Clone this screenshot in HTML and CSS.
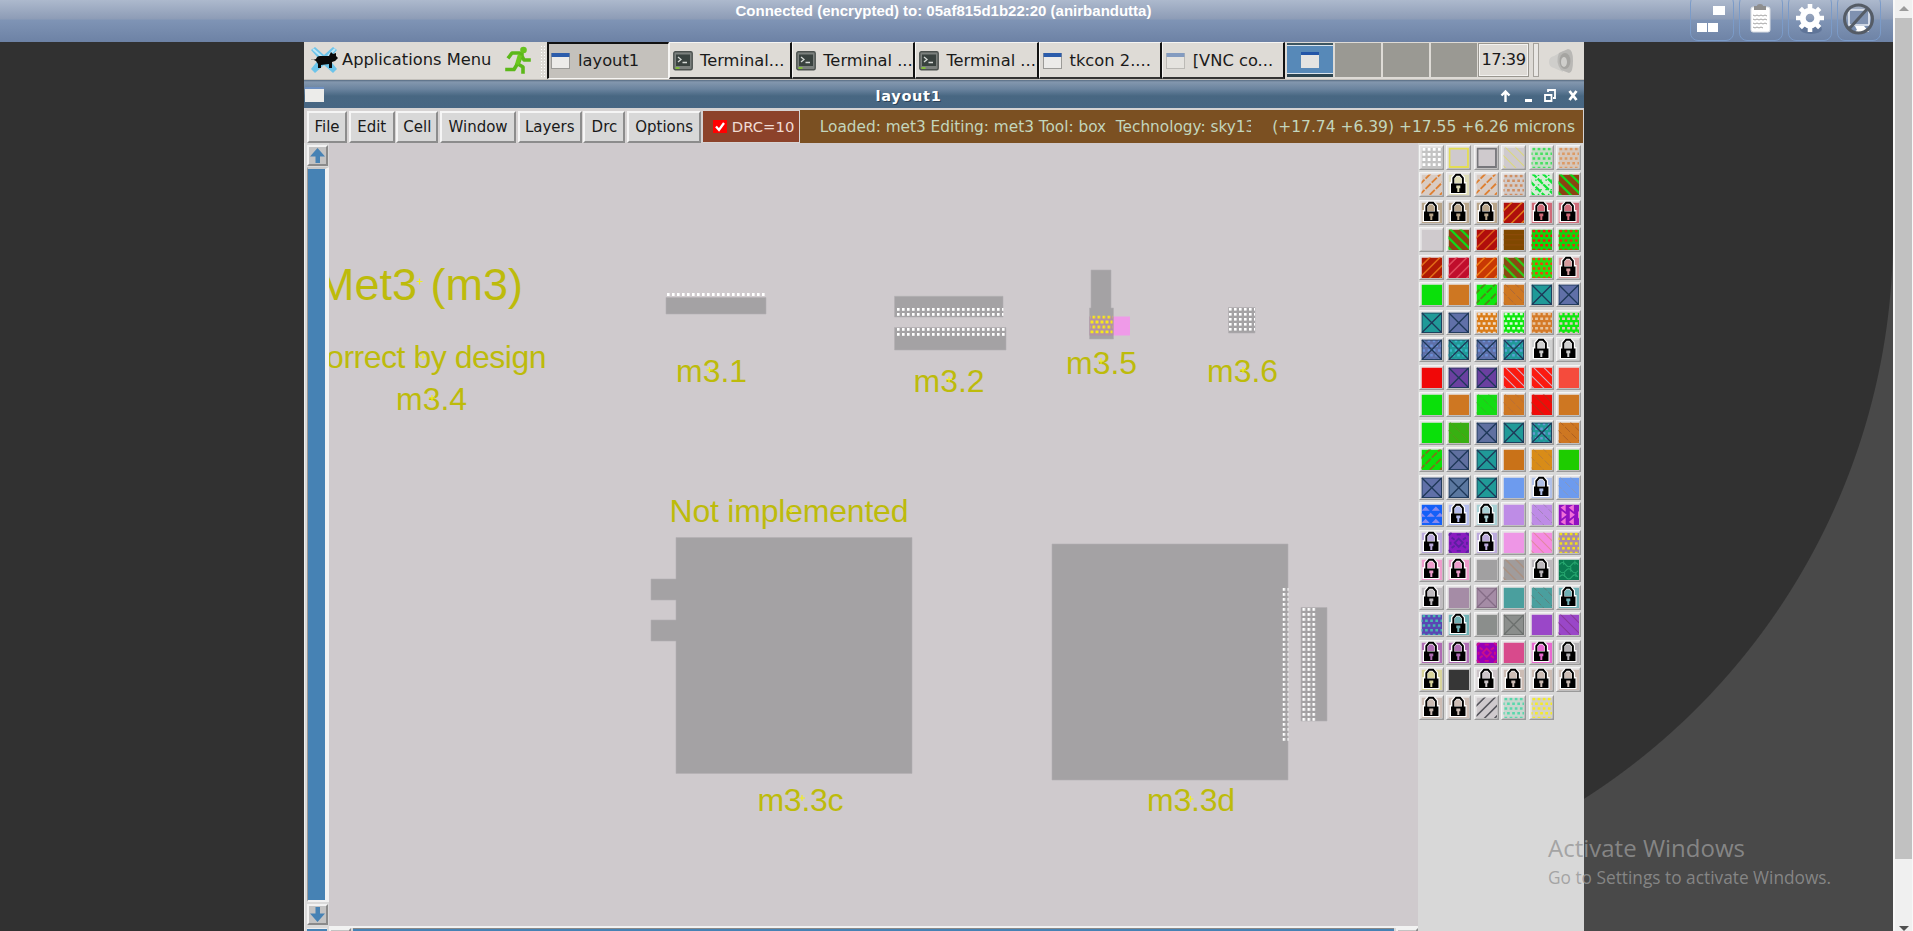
FILE: index.html
```html
<!DOCTYPE html>
<html lang="en">
<head>
<meta charset="utf-8">
<title>layout1</title>
<link rel="stylesheet" href="styles.css">
</head>
<body>
<div class="viewer">
  <header class="topbar">
    <div class="status">Connected (encrypted) to: 05af815d1b22:20 (anirbandutta)</div>
    <div class="tools">
      <div class="tool"><svg viewBox="0 0 44 46" width="44" height="46"><g fill="#fff"><rect x="23" y="11" width="12" height="9"/><rect x="7" y="28" width="10" height="9"/><rect x="18" y="28" width="10" height="9"/></g></svg></div>
      <div class="tool"><svg viewBox="0 0 44 46" width="44" height="46"><rect x="12" y="12" width="19" height="25" rx="2" fill="#fff" stroke="#d9dde3"/><path d="M15 15v-4h3q0-2 3-2t3 2h3v4z" fill="#8e8e8e"/><path d="M14 20l2 1 2-1 2 1 2-1 2 1 2-1 2 1M14 24l2 1 2-1 2 1 2-1 2 1 2-1 2 1M14 28l2 1 2-1 2 1 2-1 2 1 2-1 2 1M14 32l2 1 2-1 2 1 2-1 2 1" stroke="#999" stroke-width=".9" fill="none"/></svg></div>
      <div class="tool"><svg viewBox="0 0 44 46" width="44" height="46"><ellipse cx="23" cy="34" rx="11" ry="5" fill="#4f6488" opacity=".55"/><circle cx="22" cy="23" r="7.300" fill="none" stroke="#fff" stroke-width="6"/><g stroke="#fff" stroke-width="4.600"><path d="M22 9v5M22 32v5M8 23h5M31 23h5M12.300 13.300l3.500 3.500M28.200 29.200l3.500 3.500M31.700 13.300l-3.500 3.500M15.800 29.200l-3.500 3.500"/></g></svg></div>
      <div class="tool"><svg viewBox="0 0 44 46" width="44" height="46"><path d="M12 15h20v15H12z" fill="#7f91b0" stroke="#e9edf4" stroke-width="1.600"/><path d="M18 31h9l5 6H17l3-2z" fill="#fff"/><circle cx="21.500" cy="24" r="14" fill="none" stroke="#555c66" stroke-width="3"/><path d="M12 34L31 13" stroke="#555c66" stroke-width="3"/></svg></div>
    </div>
  </header>
  <main class="stage">
    <div class="desktop">
      <div class="taskbar">
        <div class="apps">
          <svg width="29" height="29" viewBox="0 0 29 29"><path d="M1 4l4-3 9 8 9-8 4 3-8 9 8 10-4 4-9-8-9 8-4-4 8-10z" fill="#6cc4ea"/><path d="M3 3l9 8M25 3l-7 7" stroke="#bfe6f6" stroke-width="2"/><path d="M1 13q2 1 5 0 1-3 4-3h9l2-4 2 2 3-1v3l2 2-3 3-3 1v6h-3v-4l-8 1v3H8v-4l-2-3-4-2z" fill="#0a0a0a"/></svg>
          <span>Applications Menu</span>
        </div>
        <svg class="runner" width="26" height="29" viewBox="0 0 26 29"><g fill="none" stroke="#5cb81a" stroke-width="3.600" stroke-linecap="square" stroke-linejoin="round"><path d="M4 11l3-4h7l3 1-4 10 5 3v5"/><path d="M2 23.500h7l3-5M17 10l2 4h5"/></g><path d="M13 8l4 2-3 9-4-1z" fill="#6cc81e"/><circle cx="18.500" cy="4" r="3.300" fill="#67c21e"/></svg>
        <div class="grip"></div>
        <div class="task on"><svg class="ico"><use href="#win"/></svg><span>layout1</span></div>
        <div class="task"><svg class="ico"><use href="#term"/></svg><span>Terminal...</span></div>
        <div class="task"><svg class="ico"><use href="#term"/></svg><span>Terminal ...</span></div>
        <div class="task"><svg class="ico"><use href="#term"/></svg><span>Terminal ...</span></div>
        <div class="task"><svg class="ico"><use href="#win"/></svg><span>tkcon 2....</span></div>
        <div class="task last"><svg class="ico faded"><use href="#win"/></svg><span>[VNC co...</span></div>
        <div class="pager"><div class="desk cur"><svg width="18" height="16"><rect width="18" height="16" fill="#e4e4e2"/><rect width="18" height="3" fill="#2356a8"/></svg></div><div class="desk"></div><div class="desk"></div><div class="desk"></div></div>
        <div class="clock">17:39</div>
        <div class="slot"></div>
        <svg class="speaker" width="30" height="28" viewBox="0 0 30 28"><path d="M2 14q0-5 5-6l9-5v21l-9-4q-5-1-5-6z" fill="#cfcecb"/><path d="M12 5l9-4q5 0 5 12t-4 12l-8-3q-6-8-2-17z" fill="#b9b8b5"/><ellipse cx="18" cy="13" rx="5.500" ry="8" fill="#a5a4a1"/><ellipse cx="17" cy="14" rx="3" ry="5" fill="#cfcecb"/></svg>
      </div>
      <div class="titlebar">
        <svg width="19" height="15"><rect width="19" height="15" fill="#ececea"/><rect width="19" height="2" fill="#6d8fc0"/></svg>
        <span class="title">layout1</span>
        <svg class="wbtns" width="82" height="18" viewBox="0 0 82 18"><g fill="none" stroke="#fff" stroke-width="2.400"><path d="M5.500 15V5M1.500 8.500l4-4 4 4"/><path d="M25 13.500h7" stroke-width="3"/><path d="M45 8h6.500v6H45zM48 5V3h7v8h-2" stroke-width="1.800"/><path d="M69.500 4l7 9M76.500 4l-7 9" stroke-width="2.800"/></g></svg>
      </div>
      <div class="menubar">
        <div class="mb w1">File</div><div class="mb w2">Edit</div><div class="mb w3">Cell</div><div class="mb w4">Window</div><div class="mb w5">Layers</div><div class="mb w6">Drc</div><div class="mb w7">Options</div>
        <div class="drc"><svg width="14" height="13"><rect width="14" height="13" fill="#f00"/><path d="M3 6.500l3 3.500 5-7" stroke="#fff" stroke-width="2.300" fill="none"/></svg><span>DRC=10</span></div>
        <div class="info"><span class="loaded">Loaded: met3 Editing: met3 Tool: box&nbsp; Technology: sky13</span><span class="pos">(+17.74 +6.39) +17.55 +6.26 microns</span></div>
      </div>
      <div class="work">
        <div class="vscroll">
          <div class="sbtn"><svg width="17" height="17"><path d="M8.500 1L16 9.500h-5V16H6.500V9.500H1z" fill="#4682b4"/></svg></div>
          <div class="trough"></div>
          <div class="sbtn"><svg width="17" height="17"><path d="M8.500 16L16 7.500h-5V1H6.500v6.500H1z" fill="#4682b4"/></svg></div>
          <div class="corner"></div>
        </div>
        <div class="center">
          <svg class="canvas" width="1089" height="783" viewBox="329 143 1089 783">
            <defs>
              <pattern id="d1" x="667" y="293" width="5" height="5" patternUnits="userSpaceOnUse"><rect width="2.600" height="3" fill="#fff"/></pattern>
              <pattern id="d2" x="897" y="308" width="5" height="5" patternUnits="userSpaceOnUse"><rect width="2.600" height="2.800" fill="#fff"/></pattern>
              <pattern id="d3" x="1282.500" y="588" width="5" height="5" patternUnits="userSpaceOnUse"><rect width="2.600" height="2.800" fill="#fff"/></pattern>
              <pattern id="d4" x="1302.500" y="608" width="5" height="5" patternUnits="userSpaceOnUse"><rect width="2.600" height="2.800" fill="#fff"/></pattern>
              <pattern id="d5" x="1229" y="308" width="5" height="5" patternUnits="userSpaceOnUse"><rect width="2.600" height="2.600" fill="#fff"/></pattern>
              <pattern id="y1" x="1092.500" y="315.500" width="5" height="10" patternUnits="userSpaceOnUse"><rect y="0" width="2.600" height="3" fill="#f6e81c"/><path d="M0 5h1v3H0zM3 5h2v3H3z" fill="#f6e81c"/></pattern>
            </defs>
            <g fill="#a4a2a4" stroke="#b3b0b3" stroke-width=".6">
              <path d="M666 297.500h100V314H666zM894.500 296.300H1003v20.700H894.500zM894.500 327.500H1006V350H894.500z"/>
              <path d="M1091 270h20v38h2.500v31h-24v-31h1.500zM1228.500 307.500H1255V333h-26.500z"/>
              <path d="M676 537.500h236v236H676V641h-25v-21h25v-20h-25v-21h25zM1052 544h236v236h-236zM1301 607.500h26V721h-26z"/>
            </g>
            <path d="M1113.500 316.500H1130v19h-16.500z" fill="#ef9ae8"/>
            <path d="M1089.500 316.500h24v19h-24z" fill="#b291a6"/>
            <path d="M1090 315.500h22.500v18H1090z" fill="url(#y1)"/>
            <path d="M667 293h100v4H667z" fill="url(#d1)"/>
            <path d="M895 308h108.500v9H895zM895 328h111v9H895z" fill="url(#d2)"/>
            <path d="M1282.500 588h6v153h-6z" fill="url(#d3)"/>
            <path d="M1302 608h13.500v113H1302z" fill="url(#d4)"/>
            <path d="M1229 308h26v25h-26z" fill="url(#d5)"/>
            <g class="lbl">
              <text class="big" x="317" y="299.500">Met3</text><text class="big" x="430.500" y="299.500">(m3)</text>
              <text x="546.500" y="368" text-anchor="end" textLength="243">Correct by design</text>
              <text x="396" y="409.500">m3.4</text>
              <text x="676" y="382">m3.1</text>
              <text x="913.500" y="392">m3.2</text>
              <text x="1066" y="373.500">m3.5</text>
              <text x="1207" y="382">m3.6</text>
              <text x="669.500" y="522" textLength="239">Not implemented</text>
              <text x="757.500" y="810.500" textLength="86">m3.3c</text>
              <text x="1147" y="810.500" textLength="88">m3.3d</text>
            </g>
            <path stroke="#f0ee20" stroke-width="1.200" d="M706.500 370h6M709.500 367v6M946 379.500h6M949 376.500v6M1098 361h6M1101 358v6M1240 370h6M1243 367v6M416.500 281.500h6M419.500 278.500v6M420 357h6M423 354v6M429 398h6M432 395v6M788 510h6M791 507v6M799 798h6M802 795v6M1187.500 799h6M1190.500 796v6"/>
          </svg>
          <div class="hscroll"><div class="hb"></div><div class="ht"></div><div class="hb"></div></div>
        </div>
        <div class="palette" id="palette"></div>
      </div>
    </div>
  </main>
</div>
<div class="pagescroll"><div class="arr up"></div><div class="thumb"></div><div class="rest"></div><div class="arr down"></div></div>
<div class="watermark"><div class="wm1">Activate Windows</div><div class="wm2">Go to Settings to activate Windows.</div></div>
<svg class="defs">
  <symbol id="win" viewBox="0 0 20 20"><rect x=".5" y="2.500" width="18" height="15" fill="#ecebe9" stroke="#9b9a97"/><rect x=".5" y="2" width="18" height="4" fill="#2b5cab"/></symbol>
  <symbol id="term" viewBox="0 0 20 20"><rect x=".8" y=".8" width="18.400" height="18" rx="1.500" fill="#7c817e" stroke="#4c524f" stroke-width="1.400"/><rect x="3" y="3.500" width="14" height="11.500" fill="#39423f"/><path d="M5 6l3 2.500L5 11M9.500 11.500H14" stroke="#d5d9d6" stroke-width="1.300" fill="none"/><path d="M2.500 17h4" stroke="#86d024" stroke-width="1.500"/></symbol>
</svg>
<script src="palette.js"></script>
</body>
</html>
```
FILE: styles.css
```css
* { box-sizing: border-box; }
body { margin: 0; width: 1913px; height: 931px; display: flex; overflow: hidden; background: #fff; font-family: "DejaVu Sans", sans-serif; color: #1a1a1a; position: relative; }
svg { display: block; flex: none; }
.defs { position: absolute; width: 0; height: 0; }
.viewer { width: 1893px; display: flex; flex-direction: column; }
.topbar { height: 42px; flex: none; overflow: hidden; display: grid; grid-template-columns: 1887px 0; background: linear-gradient(#adb9cd 0, #8d9cb6 19px, #7f94b5 20px, #6d82a5 42px); }
.status { grid-area: 1 / 1; text-align: center; font: bold 15px/22px "Liberation Sans", Arial, sans-serif; color: #fff; white-space: nowrap; }
.tools { grid-area: 1 / 1; display: flex; gap: 5px; justify-content: flex-end; padding-right: 6px; margin-top: -5px; }
.tool { width: 44px; height: 46px; border: 1px solid #7b9bc8; border-radius: 8px; }
.tool svg { margin: -1px; }
.stage {
  height: 889px;
  padding-left: 304px;
  background:
    linear-gradient(#313131, #313131) 0 0 / 1000px 100% no-repeat,
    linear-gradient(#313131, #313131) 0 0 / 100% 193px no-repeat,
    radial-gradient(circle at 1224px 193px, #313131 668.500px, #494949 669.500px);
}
.desktop { width: 1280px; height: 889px; display: flex; flex-direction: column; background: #d8d8d8; }
.taskbar { height: 38px; flex: none; display: flex; background: #dedbd6; border-bottom: 1px solid #c2bfba; font-size: 16.300px; line-height: 35px; white-space: nowrap; }
.apps { width: 198px; display: flex; padding: 0 0 0 6px; font-size: 16.300px; }
.apps svg { margin: 4px 3px 0 0; }
.runner { margin: 4px 9px 0 3px; }
.grip { width: 7px; margin-top: 3px; height: 32px; background: radial-gradient(circle, #fff 0.8px, transparent 1px) 0 0 / 3px 3px; }
.task { width: 123.200px; height: 37px; display: flex; border-style: solid; border-color: #f6f5f3 #111 #333 #f6f5f3; border-width: 1px 2px 2px 1px; padding-left: 3px; }
.task.on { width: 122px; background: #c4c1bc; border-color: #111 #f6f5f3 #f6f5f3 #111; border-width: 2px 1px 1px 2px; padding-left: 2px; line-height: 33px; }
.ico { width: 20px; height: 20px; margin: 8px 7px 0 0; }
.task.on .ico { margin: 7px 7px 0 0; }
.faded { opacity: .5; }
.pager { width: 191px; margin-left: 2px; display: flex; gap: 2px; padding: 1px 0 2px; background: #dedbd6; }
.desk { width: 46px; background: #9a9993; }
.cur { background: #5789b8; border-top: 2px solid #3c5560; border-bottom: 3px solid #2c4450; box-shadow: inset 0 1px #dbe4ec, inset 0 -1px #dbe4ec; display: grid; place-items: center; }
.clock { width: 51px; height: 34px; margin-top: 1px; border: 1px solid #99968f; box-shadow: inset 0 0 0 1px #f3f2f0; font-size: 16.300px; line-height: 32px; text-align: center; letter-spacing: -.6px; }
.slot { width: 6px; height: 34px; margin: 1px 8px 0 4px; border: 1px solid #a5a29c; background: #e9e7e4; }
.speaker { margin-top: 6px; }
.titlebar { height: 28px; flex: none; display: flex; align-items: center; padding: 4px 2px 0 1px; background: linear-gradient(#566b82 0, #8397ae 2px, #6b849f 9px, #486782 16px, #476683 100%); }
.titlebar > svg:first-child { margin-top: -4px; }
.title { flex: 1; text-align: center; padding-right: 9px; font-size: 14.500px; font-weight: bold; letter-spacing: .7px; color: #fff; text-shadow: 1px 1px #2c4156; }
.wbtns { margin: 0 0 0 -2px; }
.menubar { height: 35px; flex: none; display: flex; padding: 2px 1px 0 3px; background: #d6d3d3; font-size: 15px; line-height: 32px; white-space: nowrap; }
.mb { height: 32px; margin: 1px 1.700px 0 0; text-align: center; background: #d8d8d8; border-style: solid; border-width: 2px; border-color: #f5f5f5 #8c8c8c #8c8c8c #f5f5f5; line-height: 28px; }
.w1 { width: 40px; } .w2 { width: 46px; } .w3 { width: 42px; } .w4 { width: 76px; } .w5 { width: 64px; } .w6 { width: 42px; } .w7 { width: 74px; }
.drc { width: 96px; height: 31px; margin: 1px 1px 0 0; display: flex; align-items: center; gap: 5px; padding-left: 10px; background: #8c422a; color: #f0dcd4; font-size: 14.800px; }
.info { flex: 1; height: 33px; display: flex; justify-content: space-between; padding: 0 8px 0 20px; background: #7b5022; color: #c3d6bd; line-height: 34px; font-size: 15.300px; }
.loaded { width: 431px; overflow: hidden; }
.pos { font-size: 15.500px; }
.work { height: 788px; display: flex; }
.vscroll { width: 25px; padding: 2px 1px 0 2px; display: flex; flex-direction: column; border-left: 1px solid #eee; background: #d9d9d9; }
.sbtn { width: 21px; height: 21px; background: #c3c3c3; border: 2px solid; border-color: #f2f2f2 #8a8a8a #8a8a8a #f2f2f2; }
.trough { height: 735px; flex: none; margin: 1px 0 2px; width: 22px; background: #4682b4; border: solid; border-width: 2px 4px 2px 1px; border-color: #c9c9c9 #f2f2f2 #f2f2f2 #999; }
.corner { margin-top: 3px; width: 20px; height: 3px; background: #4682b4; border-top: 1px solid #eee; }
.center { width: 1089px; }
.canvas { background: #cfcacd; height: 783px; }
.lbl { font: 32px "Liberation Sans", Arial, sans-serif; fill: #bdbb0b; }
.big { font-size: 45px; }
.hscroll { height: 5px; display: flex; gap: 2px; border-top: 2px solid #f2f2f2; background: #d9d9d9; }
.hb { width: 22px; border: 2px solid; border-bottom: 0; border-color: #f2f2f2 #8a8a8a #8a8a8a #f2f2f2; background: #c3c3c3; }
.ht { flex: 1; border-top: 1px solid #8a8a8a; background: #4682b4; }
.palette { width: 166px; padding: 1.500px 0 0 .800px; display: grid; grid-template-columns: repeat(6, 27.500px); grid-auto-rows: 27.500px; align-content: start; background: #d8d8d8; }
.pagescroll { width: 20px; padding: 0 1px 0 2px; display: flex; flex-direction: column; background: #f8f8f8; }
.thumb { height: 841px; flex: none; background: #c1c1c1; }
.rest { height: 58px; background: #f0f0f0; }
.arr { height: 18px; background: #f0f0f0; flex: none; }
.up::after, .down::after { content: ""; display: block; width: 0; margin: 0 auto; border: 5px solid transparent; }
.up::after { border-bottom-color: #9b9b9b; border-top-width: 6px; }
.down::after { border-top: 5px solid #505050; margin-top: 9px; }
.down { height: 14px; }
.watermark { position: absolute; left: 1548px; top: 833px; color: rgba(150, 150, 150, .8); font-family: "Open Sans", sans-serif; white-space: nowrap; }
.wm1 { font-size: 24px; line-height: 30px; }
.wm2 { font-size: 17.300px; line-height: 30px; }
```
FILE: palette.js
```js
// Each entry: kind, background, foreground
const layers = `
dots #c4c4c4 #fff|box #cfcacd #e3dd55|box #cfcacd #77777b|backt #cfcacd #dbd87c|brick #c6dcc6 #46e060|brick #d6c6ba #dc9a64
fwdd #d9ccc4 #dd8033|lock #dedcb8|fwdd #d9ccc4 #dd8033|brick #d2cac8 #cf8e62|backd #d8ecd8 #12e53a|backw #8a4312 #10d818
lock #b9a58a|lock #b9a58a|lock #b9a58a|fwd #ae0f0c #e07818|lock #cf6a78|lock #cf6a78
flat #cfcacd|backw #8a4312 #10d818|fwd #b00e0c #da5a18|hatch #804800 #8b4a08|brick #0ed80e #f01810|brick #0ed80e #d83a10
fwd #b01a04 #e06a18|fwd #c00d2c #e0485c|fwd #c83804 #f08018|backw #8a4a12 #30c818|brick #28e010 #f04010|lock #d49a9c
flat #0ae00a|flat #ce7722|fwdd #0ee80e #4c8c18|slight #ce7722 #a8683c|x #209a98|x #6070a8
x #209a98|x #6070a8|holes #da7c18 #f0dcc8|holes #0ee80e #dcf8dc|holes #d47a28 #e8c4a0|holes #0ee80e #e0c8c0
xd #6070a8 #6a90d8|xd #209a98 #38b8c8|xd #6070a8 #6a90d8|xd #209a98 #5aa0d8|lock #d0d0d0|lock #d0d0d0
flat #f00808|x #6a40a0|x #6a40a0|backt #fb1a10 #d0b4c8|backt #fb1a10 #d0b4c8|flat #f54b3c
flat #0ae00a|flat #ce7722|slight #14dc14 #34b424|slight #ce7722 #b87038|backt #f20a08 #b03018|flat #ce7722
flat #0ae00a|slight #38b012 #58981c|x #6070a0|x #209a98|xd #209a98 #6898d0|slight #ce7722 #a85c24
fwdd #0ae00a #787818|x #6070a0|x #209a98|flat #c97218|slight #d88c18 #b87c38|flat #1ecc00
x #6070a8|x #5b78a0|x #209a98|flat #6d9bee|lock #b0c0e8|slight #6d9bee #8898bc
tri #1560f8 #8a8aee|lock #b4bcec|lock #a8d0d4|flat #be8ce6|slight #be8ce6 #a084b4|tri2 #9010c0 #f070d8
lock #bcaadc|flower #8a1cc0 #5c20a0|lock #bcaadc|flat #ee96e6|backt #f48ce0 #e088a0|brick #a88aa8 #f0e018
lock #ee9ccc|lock #ee9ccc|flat #a1a0a1|back #a09c9c #aa9080|lock #bcb8bc|curl #0a7a50 #28a870
lock #c0bcc0|flat #a58ca6|xo #a58ca6 #846c86|flat #4a9f9e|slight #4a9f9e #607c78|lock #70b0b4
brick #5a46b4 #48b8b0|lock #70b0b4|flat #8b8e8c|xo #8b8e8c #6c706e|flat #9a47c8|backt #9a47c8 #883898
lock #b06cb4|lock #b06cb4|flower #9600b8 #c81088|flat #d84a8c|lock #e868d0|lock #b4b0b4
lock #d8d49c|flat #363636|lock #ccc4c8|lock #ccbcb4|lock #ccbcb4|lock #ccbcb4
lock #ccbcb4|lock #ccbcb4|fwd #cfcacd #55555c|brick #c8d6ce #58d8ac|brick #d4d0c4 #f4ec28`;

const frame = '<path d="M0 25V0h25z" fill="#f4f4f4"/><path d="M25 0v25H0z" fill="#999"/><path d="M1 1h22.500v22.500H1z" fill="#e6e4e5"/>';
const line = (d, c, w, extra = '') => `<path d="${d}" stroke="${c}" stroke-width="${w}" fill="none" ${extra}/>`;
const fwdD = 'M-2 10L10 -2M-2 20L20 -2M2 26L26 2M12 26L26 12';
const backD = 'M10 -2L22 10M0 -2L22 20M-2 6L18 26M-2 16L8 26';
const cross = c => line('M0 0L20 20M20 0L0 20', c, 1.3) + line('M.5 .5h19v19H.5z', c, .9);

function grid(c, w, h, stagger, dx = 5, dy = 4.6) {
  let d = '';
  for (let r = 0; r < 5; r++) for (let i = -1; i < 6; i++) {
    d += `M${(i * dx + 1 + (stagger && r % 2 ? dx / 2 : 0)).toFixed(1)} ${(r * dy + .3).toFixed(1)}h${w}v${h}h-${w}z`;
  }
  return `<path d="${d}" fill="${c}"/>`;
}

function art(kind, fg) {
  switch (kind) {
    case 'dots': return grid(fg, 2.8, 2.8, false, 5, 5);
    case 'brick': return grid(fg, 2.6, 2.4, true);
    case 'holes': return grid(fg, 2.8, 2.5, true);
    case 'box': return line('M1 1h18v18H1z', fg, 1.8);
    case 'fwd': return line(fwdD, fg, 1.5);
    case 'fwdd': return line(fwdD, fg, 1.8, 'stroke-dasharray="7 1.5"');
    case 'back': return line(backD, fg, 1.4);
    case 'backw': return line(backD, fg, 2.2);
    case 'backd': return line(backD, fg, 2.2, 'stroke-dasharray="7 1.5"') + grid(fg, 1.6, 1.2, true);
    case 'backt': return line(backD, fg, 1);
    case 'slight': return line(backD, fg, .9, 'stroke-dasharray="7 2"');
    case 'hatch': return line('M0 5h20M0 10h20M0 15h20', fg, 1);
    case 'x': return cross('#1e3858');
    case 'xo': return cross(fg);
    case 'xd': return grid(fg, 2.5, 2.5, true) + cross('#1e3858');
    case 'tri': return `<path d="M0 6l4-4 4 4zM10 6l4-4 4 4zM5 12l4-4 4 4zM14 12l4-4 4 4zM-3 12l3-4 4 4zM0 18l4-4 4 4zM10 18l4-4 4 4z" fill="${fg}"/>`;
    case 'tri2': return `<path d="M7 0v7L2 3zM15 0v7l-5-4zM3 6v8l5-4zM11 6v8l5-4zM19 6v8l3-4zM7 13v7l-5-3zM15 13v7l-5-3z" fill="${fg}"/>`;
    case 'flower': return line('M10 6l4 4-4 4-4-4zM0 3l3-3M17 0l3 3M0 17l3 3M20 17l-3 3M3 5l3 2M17 5l-3 2M3 15l3-2M17 15l-3-2M8 2h4M8 18h4M2 9v3M18 9v3', fg, 1.8);
    case 'curl': return line('M1 5q3-4 6 0t6 0 6 0M1 11q3 4 6 0t6 0 6 0M1 17q3-4 6 0t6 0 6 0M5 1v4M12 7v5M16 1v4M6 13v4M17 13v4', fg, 1);
  }
  return '';
}

function lock(bg) {
  return `<path d="M3.500 22V10H5V5l3.500-3.500h7L19 5v5h1.500v12z" fill="#fff"/>
    <path d="M8.500 11V7l2-2.500h3l2 2.500v4z" fill="${bg}"/>
    <path d="M7.300 12V6.200l2.800-3.400h4l2.800 3.400V12" fill="none" stroke="#000" stroke-width="1.900"/>
    <path d="M5 11.500h14.500v9.500H5z" fill="#000"/><path d="M10.300 13.500h4v2.800h-1v3.700h-2v-3.700h-1z" fill="${bg}"/>`;
}

document.getElementById('palette').innerHTML = layers.trim().split(/[|\n]/).map(s => {
  const [kind, bg, fg] = s.trim().split(' ');
  return `<svg width="25" height="25" viewBox="0 0 25 25">${frame}<svg x="2.500" y="2.500" width="20.500" height="20.500" viewBox="0 0 20 20"><rect width="20" height="20" fill="${bg}"/>${art(kind, fg)}</svg>${kind === 'lock' ? lock(bg) : ''}</svg>`;
}).join('');
```
